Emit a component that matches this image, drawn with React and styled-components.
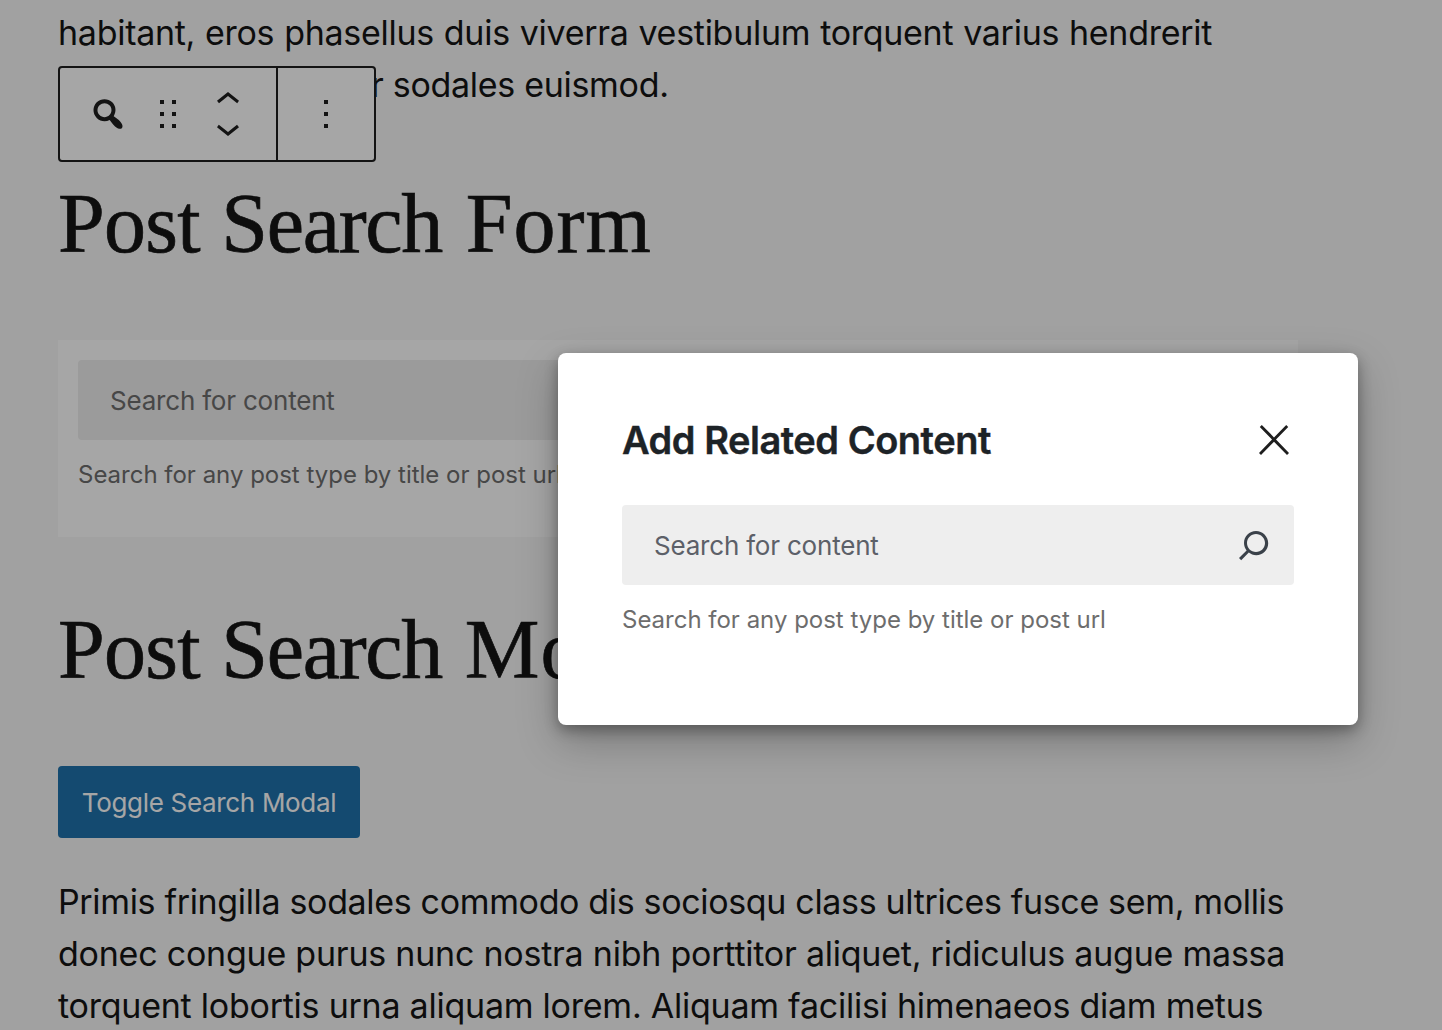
import React from "react";
import styled, { createGlobalStyle } from "styled-components";

const GlobalStyle = createGlobalStyle`
  *, *::before, *::after { box-sizing: border-box; }
  body { margin: 0; background: #f7f7f7; }
`;

const Page = styled.div`
  position: relative;
  height: 1030px;
  overflow: hidden;
  background: #f7f7f7;
  color: #141414;
  font-family: Inter, "Liberation Sans", sans-serif;
`;

const Content = styled.main`
  display: flex;
  flex-direction: column;
  align-items: flex-start;
  width: 1298px;
  padding: 7px 0 0 58px;
`;

const Paragraph = styled.p`
  margin: ${(p) => p.$margin || "0"};
  font-size: 34px;
  line-height: 52px;
`;

const Line = styled.span`
  display: block;
  white-space: nowrap;
  padding-left: ${(p) => p.$indent || 0}px;
  letter-spacing: ${(p) => p.$track || 0}px;
  word-spacing: ${(p) => p.$gap || 0}px;
`;

const Heading = styled.h2`
  margin: 65px 0 68px;
  font-family: "Liberation Serif", serif;
  font-size: 84px;
  font-weight: 400;
  line-height: 96px;
  white-space: nowrap;
  -webkit-text-stroke: 0.7px currentColor;
`;

const Word = styled.span`
  margin-left: ${(p) => p.$shift || 0}px;
  letter-spacing: ${(p) => p.$track}px;
`;

const SearchCard = styled.section`
  width: 1240px;
  height: 197px;
  padding: 20px;
  background: #fff;
`;

const SearchField = styled.div`
  display: flex;
  align-items: center;
  justify-content: space-between;
  height: 80px;
  padding: 0 16px 0 32px;
  border-radius: 4px;
  background: #eee;
`;

const Placeholder = styled.span`
  padding-top: 2px;
  font-size: 26px;
  line-height: 36px;
  letter-spacing: -0.2px;
  color: ${(p) => p.$color || "#6d6d6d"};
`;

const Help = styled.p`
  margin: 18px 0 0;
  font-size: 24px;
  line-height: 34px;
  letter-spacing: -0.01px;
  color: #6d6d6d;
  white-space: nowrap;
`;

const PrimaryButton = styled.button`
  width: 302px;
  height: 72px;
  padding: 0;
  border: 0;
  border-radius: 4px;
  background: #2072ac;
  color: #fff;
  font-family: inherit;
  font-size: 26px;
  letter-spacing: -0.32px;
  white-space: nowrap;
`;

const Toolbar = styled.div`
  position: absolute;
  left: 58px;
  top: 66px;
  display: flex;
  width: 318px;
  height: 96px;
  border: 2px solid #1e1e1e;
  border-radius: 4px;
  background: #fff;
  color: #1e1e1e;
`;

const ToolGroup = styled.div`
  display: flex;
  align-items: center;
  width: ${(p) => p.$width}px;
  padding-left: ${(p) => p.$pad || 0}px;
  & + & { border-left: 2px solid #1e1e1e; }
`;

const ToolButton = styled.button`
  display: flex;
  align-items: center;
  justify-content: center;
  width: ${(p) => p.$width}px;
  height: 92px;
  padding: 0;
  border: 0;
  background: none;
  color: inherit;
`;

const Movers = styled.div`
  display: flex;
  flex-direction: column;
  justify-content: space-between;
  width: 48px;
  height: 76px;
  margin-left: 12px;
`;

const Mover = styled.button`
  display: flex;
  align-items: ${(p) => p.$align};
  height: 38px;
  padding: 0;
  border: 0;
  background: none;
  color: inherit;
`;

const Scrim = styled.div`
  position: absolute;
  inset: 0;
  background: rgba(0, 0, 0, 0.35);
`;

const Modal = styled.div`
  position: absolute;
  left: 558px;
  top: 353px;
  width: 800px;
  height: 372px;
  padding: 63px 64px 0;
  border-radius: 8px;
  background: #fff;
  box-shadow: 0 5px 14px rgba(0, 0, 0, 0.32), 0 16px 40px rgba(0, 0, 0, 0.25);
`;

const ModalHeader = styled.header`
  display: flex;
  align-items: center;
  justify-content: space-between;
  height: 48px;
  margin: 0 -4px 41px 0;
`;

const ModalTitle = styled.h1`
  margin: 0;
  font-size: 38px;
  font-weight: 600;
  line-height: 48px;
  letter-spacing: -0.48px;
  color: #1d2327;
  white-space: nowrap;
  -webkit-text-stroke: 0.4px currentColor;
`;

const IconButton = styled.button`
  display: flex;
  padding: 0;
  border: 0;
  background: none;
  color: ${(p) => p.$color};
`;

function Icon({ d, size, box = 24 }) {
  return (
    <svg width={size} height={size} viewBox={`0 0 ${box} ${box}`} fill="currentColor" aria-hidden="true">
      <path d={d} />
    </svg>
  );
}

const icons = {
  block:
    "M12.14 4.18c1.87 1.87 2.11 4.75.72 6.89.12.1.22.21.36.31.2.16.47.36.81.59.34.24.56.39.66.47.42.31.73.57.94.78.32.32.6.65.84 1 .25.35.44.69.59 1.04.14.35.21.68.18 1-.02.32-.14.59-.36.81s-.49.34-.81.36c-.31.02-.65-.04-.99-.19-.35-.14-.7-.34-1.04-.59-.35-.24-.68-.52-1-.84-.21-.21-.47-.52-.77-.93-.1-.13-.25-.35-.47-.66-.22-.32-.4-.57-.56-.78-.16-.2-.29-.35-.44-.5-2.07 1.09-4.69.76-6.44-.98-2.14-2.15-2.14-5.64 0-7.78 2.15-2.15 5.63-2.15 7.78 0zm-1.41 6.36c1.36-1.37 1.36-3.58 0-4.95-1.37-1.37-3.59-1.37-4.95 0-1.37 1.37-1.37 3.58 0 4.95 1.36 1.37 3.58 1.37 4.95 0z",
  drag: "M5 4h2V2H5v2zm6-2v2h2V2h-2zm-6 8h2V8H5v2zm6 0h2V8h-2v2zm-6 6h2v-2H5v2zm6 0h2v-2h-2v2z",
  up: "M6.5 12.4L12 8l5.5 4.4-.9 1.2L12 10l-4.5 3.6-1-1.2z",
  down: "M17.5 11.6L12 16l-5.5-4.4.9-1.2L12 14l4.5-3.6 1 1.2z",
  more: "M13 19h-2v-2h2v2zm0-6h-2v-2h2v2zm0-6h-2V5h2v2z",
  close: "M13 11.8l6.1-6.3-1-1-6.1 6.2-6.1-6.2-1 1 6.1 6.3-6.5 6.7 1 1 6.5-6.6 6.5 6.6 1-1z",
  search:
    "M13 5c-3.3 0-6 2.7-6 6 0 1.4.5 2.7 1.3 3.7l-3.8 3.8 1.1 1.1 3.8-3.8c1 .8 2.3 1.3 3.7 1.3 3.3 0 6-2.7 6-6S16.3 5 13 5zm0 10.5c-2.5 0-4.5-2-4.5-4.5s2-4.5 4.5-4.5 4.5 2 4.5 4.5-2 4.5-4.5 4.5z",
};

export default function App() {
  return (
    <Page>
      <GlobalStyle />
      <Content>
        <Paragraph>
          <Line $track={-0.28} $gap={0.6}>habitant, eros phasellus duis viverra vestibulum torquent varius hendrerit</Line>
          <Line $indent={313} $track={-0.3}>r sodales euismod.</Line>
        </Paragraph>
        <Heading>
          <Word $track={-0.7}>Post </Word>
          <Word $track={-1.3} $shift={1}>Search </Word>
          <Word $track={1} $shift={4}>Form</Word>
        </Heading>
        <SearchCard>
          <SearchField>
            <Placeholder>Search for content</Placeholder>
          </SearchField>
          <Help>Search for any post type by title or post url</Help>
        </SearchCard>
        <Heading>
          <Word $track={-0.7}>Post </Word>
          <Word $track={-1.3} $shift={1}>Search </Word>
          <Word $track={1} $shift={3}>Modal</Word>
        </Heading>
        <PrimaryButton>Toggle Search Modal</PrimaryButton>
        <Paragraph $margin="38px 0 0">
          <Line $track={-0.34}>Primis fringilla sodales commodo dis sociosqu class ultrices fusce sem, mollis</Line>
          <Line $track={-0.23}>donec congue purus nunc nostra nibh porttitor aliquet, ridiculus augue massa</Line>
          <Line $track={-0.24}>torquent lobortis urna aliquam lorem. Aliquam facilisi himenaeos diam metus</Line>
        </Paragraph>
      </Content>

      <Toolbar>
        <ToolGroup $width={216} $pad={12}>
          <ToolButton $width={72}><Icon d={icons.block} size={40} box={20} /></ToolButton>
          <ToolButton $width={48}><Icon d={icons.drag} size={36} box={18} /></ToolButton>
          <Movers>
            <Mover $align="flex-start"><Icon d={icons.up} size={48} /></Mover>
            <Mover $align="flex-end"><Icon d={icons.down} size={48} /></Mover>
          </Movers>
        </ToolGroup>
        <ToolGroup $width={98}>
          <ToolButton $width={96}><Icon d={icons.more} size={48} /></ToolButton>
        </ToolGroup>
      </Toolbar>

      <Scrim />

      <Modal role="dialog" aria-label="Add Related Content">
        <ModalHeader>
          <ModalTitle>Add Related Content</ModalTitle>
          <IconButton $color="#1e1e1e" aria-label="Close"><Icon d={icons.close} size={48} /></IconButton>
        </ModalHeader>
        <SearchField>
          <Placeholder $color="#5c6068">Search for content</Placeholder>
          <IconButton $color="#3a4149" aria-label="Search"><Icon d={icons.search} size={48} /></IconButton>
        </SearchField>
        <Help>Search for any post type by title or post url</Help>
      </Modal>
    </Page>
  );
}
